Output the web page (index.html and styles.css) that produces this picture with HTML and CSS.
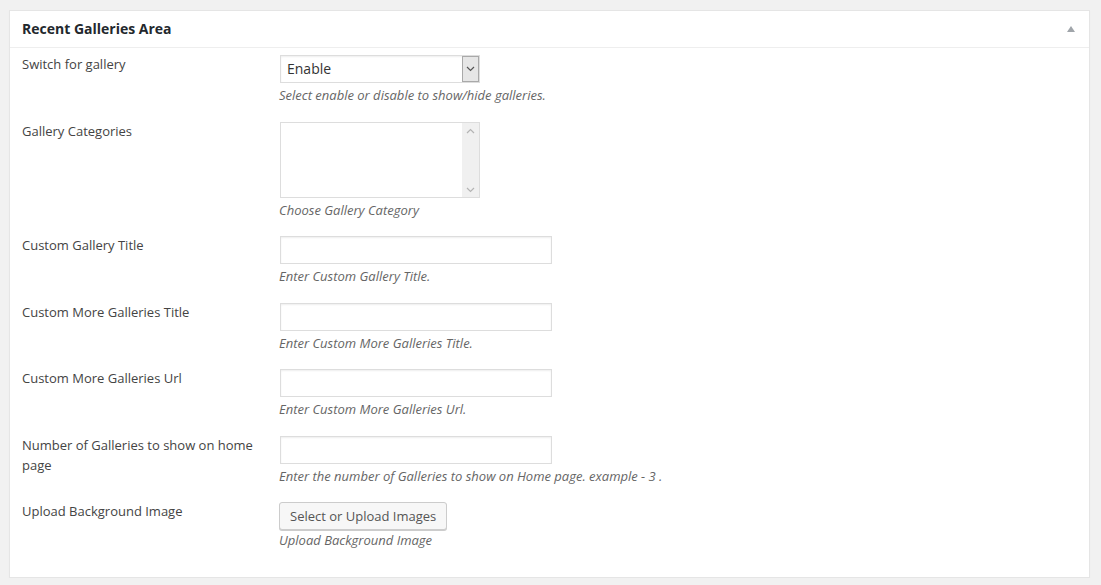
FILE: index.html
```html
<!DOCTYPE html>
<html>
<head>
<meta charset="utf-8">
<link rel="stylesheet" href="styles.css">
</head>
<body>
<div class="postbox">
  <div class="hndle">
    <h2 class="title">Recent Galleries Area</h2>
    <span class="toggle"></span>
  </div>
  <div class="inside">
    <div class="row">
      <div class="label">Switch for gallery</div>
      <div class="field">
        <div class="select">
          <span class="select-text">Enable</span>
          <span class="select-arrow"><svg width="9" height="6" viewBox="0 0 9 6"><path d="M1 1 L4.5 4.5 L8 1" fill="none" stroke="#555" stroke-width="1.2"/></svg></span>
        </div>
        <p class="desc">Select enable or disable to show/hide galleries.</p>
      </div>
    </div>
    <div class="row">
      <div class="label">Gallery Categories</div>
      <div class="field">
        <div class="listbox">
          <div class="list-area"></div>
          <div class="scrollbar">
            <svg width="9" height="6" viewBox="0 0 9 6"><path d="M1 5 L4.5 1.5 L8 5" fill="none" stroke="#b4b4b4" stroke-width="1.2"/></svg>
            <svg width="9" height="6" viewBox="0 0 9 6"><path d="M1 1 L4.5 4.5 L8 1" fill="none" stroke="#b4b4b4" stroke-width="1.2"/></svg>
          </div>
        </div>
        <p class="desc">Choose Gallery Category</p>
      </div>
    </div>
    <div class="row">
      <div class="label">Custom Gallery Title</div>
      <div class="field">
        <input class="text" type="text">
        <p class="desc">Enter Custom Gallery Title.</p>
      </div>
    </div>
    <div class="row">
      <div class="label">Custom More Galleries Title</div>
      <div class="field">
        <input class="text" type="text">
        <p class="desc">Enter Custom More Galleries Title.</p>
      </div>
    </div>
    <div class="row">
      <div class="label">Custom More Galleries Url</div>
      <div class="field">
        <input class="text" type="text">
        <p class="desc">Enter Custom More Galleries Url.</p>
      </div>
    </div>
    <div class="row">
      <div class="label">Number of Galleries to show on home page</div>
      <div class="field">
        <input class="text" type="text">
        <p class="desc">Enter the number of Galleries to show on Home page. example - 3 .</p>
      </div>
    </div>
    <div class="row">
      <div class="label">Upload Background Image</div>
      <div class="field">
        <button class="button" type="button">Select or Upload Images</button>
        <p class="desc">Upload Background Image</p>
      </div>
    </div>
  </div>
</div>
</body>
</html>
```
FILE: styles.css
```css
html, body {
  margin: 0;
  padding: 0;
  background: #f1f1f1;
}
body {
  padding: 10px 11px 0 9px;
  font-family: "Open Sans", "Liberation Sans", sans-serif;
  font-size: 13px;
  color: #444;
}
.postbox {
  background: #fff;
  border: 1px solid #e5e5e5;
  box-shadow: 0 1px 1px rgba(0,0,0,0.04);
  height: 568px;
  box-sizing: border-box;
}
.hndle {
  display: flex;
  align-items: center;
  justify-content: space-between;
  height: 36px;
  border-bottom: 1px solid #eee;
  padding: 0 14px 0 12px;
}
.title {
  margin: 0;
  font-size: 14px;
  font-weight: 700;
  color: #23282d;
  line-height: 1.4;
}
.toggle {
  width: 0;
  height: 0;
  border-left: 4.5px solid transparent;
  border-right: 4.5px solid transparent;
  border-bottom: 6px solid #a0a5aa;
  margin-top: -1px;
}
.inside {
  padding: 6px 12px 0 12px;
}
.row {
  display: flex;
  padding-bottom: 15.5px;
}
.label {
  width: 248px;
  margin-right: 10px;
  line-height: 20px;
  color: #444;
  padding-top: 0;
}
.field {
  flex: 1;
  padding-top: 1px;
}
.desc {
  margin: 2px 0 0 -1px;
  font-style: italic;
  color: #666;
  line-height: 20px;
}
.select {
  width: 200px;
  height: 28px;
  box-sizing: border-box;
  border: 1px solid #ddd;
  box-shadow: inset 0 1px 2px rgba(0,0,0,0.07);
  display: flex;
  align-items: stretch;
  justify-content: space-between;
  background: #fff;
}
.select-text {
  padding-left: 6px;
  font-size: 14px;
  line-height: 26px;
  color: #333;
}
.select-arrow {
  width: 17px;
  box-sizing: border-box;
  border: 1px solid #a9a9a9;
  background: #e6e6e6;
  display: flex;
  align-items: center;
  justify-content: center;
}
.listbox {
  width: 200px;
  height: 76px;
  box-sizing: border-box;
  border: 1px solid #ddd;
  display: flex;
  background: #fff;
}
.list-area {
  flex: 1;
}
.scrollbar {
  width: 17px;
  background: #f0f0f0;
  display: flex;
  flex-direction: column;
  align-items: center;
  justify-content: space-between;
  padding: 5px 0 4px;
  box-sizing: border-box;
}
.text {
  display: block;
  width: 272px;
  height: 28px;
  box-sizing: border-box;
  border: 1px solid #ddd;
  box-shadow: inset 0 1px 2px rgba(0,0,0,0.07);
  margin: 0;
  padding: 0 6px;
  font-family: inherit;
  font-size: 14px;
  background: #fff;
  outline: none;
}
.button {
  display: block;
  height: 28px;
  margin: 0;
  padding: 0 10px 1px;
  margin-left: -1px;
  font-family: "Open Sans", "Liberation Sans", sans-serif;
  font-size: 13px;
  line-height: 26px;
  color: #555;
  background: #f7f7f7;
  border: 1px solid #ccc;
  border-radius: 3px;
  box-shadow: 0 1px 0 #ccc;
  cursor: pointer;
}
.button + .desc {
  margin-top: 0;
}
```
